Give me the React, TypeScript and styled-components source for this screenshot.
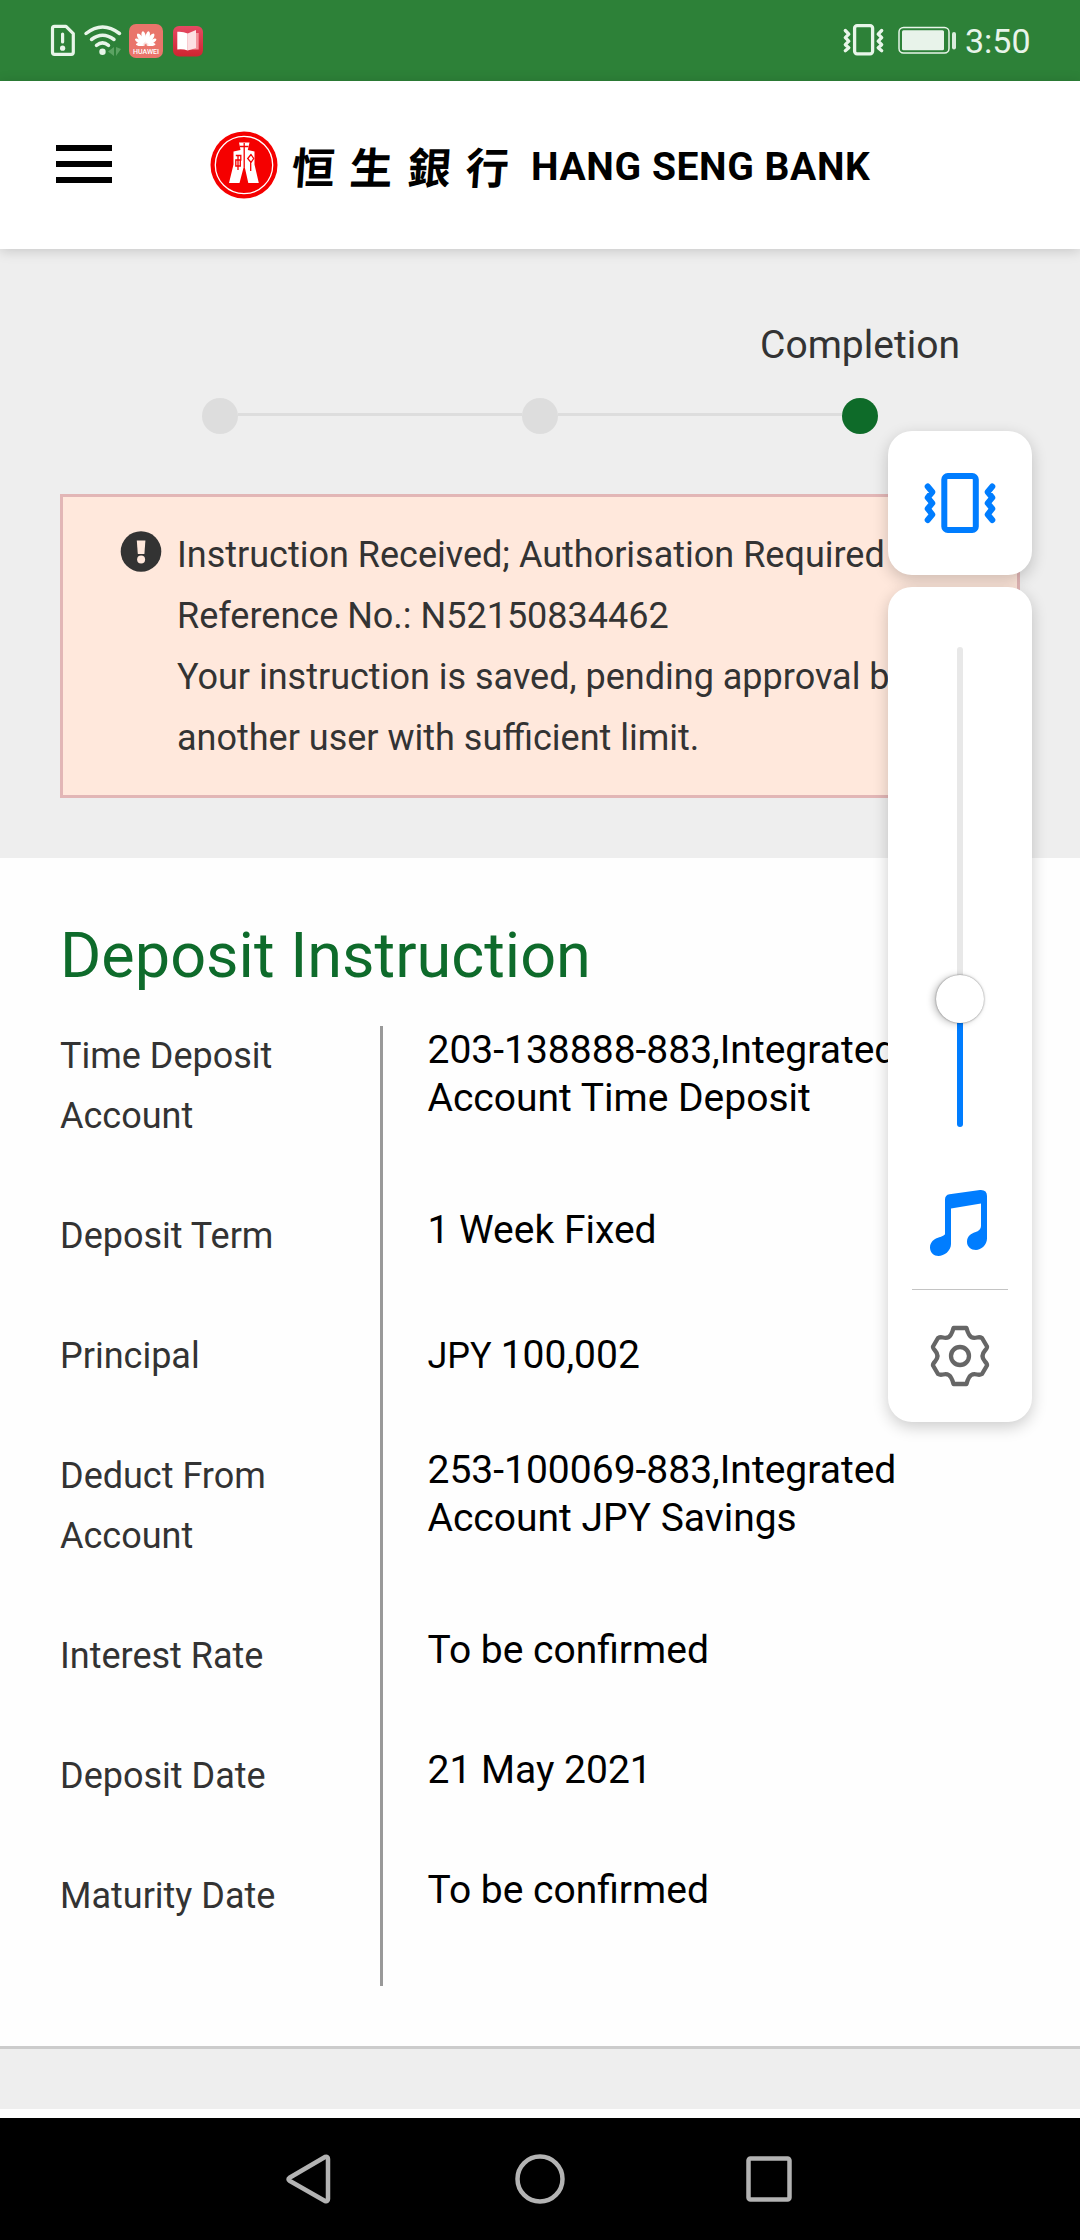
import React from "react";
import styled, { createGlobalStyle } from "styled-components";

const GlobalStyle = createGlobalStyle`
  * { box-sizing: border-box; }
  body { margin: 0; background: #fff; }
`;

const Screen = styled.div`
  position: relative;
  display: flex;
  flex-direction: column;
  width: 1080px;
  height: 2240px;
  overflow: hidden;
  background: #fefefe;
  font-family: Roboto, "Noto Sans", sans-serif;
  color: #333;
`;

const StatusBar = styled.div`
  display: flex;
  justify-content: space-between;
  height: 81px;
  flex: none;
  padding: 0 50px 0 50px;
  background: #2d8138;
`;

const StatusIcons = styled.svg`
  width: 160px;
  height: 81px;
`;

const StatusRight = styled.div`
  display: flex;
  gap: 7px;
`;

const BatteryIcons = styled.svg`
  width: 118px;
  height: 81px;
`;

const Clock = styled.span`
  width: 65px;
  font-size: 34px;
  line-height: 81px;
  padding-top: 1px;
  color: #e8f4ea;
  white-space: nowrap;
`;

const Header = styled.header`
  position: relative;
  z-index: 1;
  display: flex;
  align-items: center;
  height: 168px;
  flex: none;
  padding: 0 56px;
  background: #fff;
  box-shadow: 0 2px 12px rgba(0, 0, 0, 0.17);
`;

const MenuButton = styled.div`
  display: flex;
  flex-direction: column;
  gap: 10px;
  width: 56px;
  margin-bottom: 2px;
`;

const MenuBar = styled.span`
  height: 6px;
  background: #000;
`;

const Logo = styled.div`
  display: flex;
  align-items: center;
  margin-left: 98px;
`;

const Emblem = styled.svg`
  width: 68px;
  height: 68px;
`;

const ChineseName = styled.span`
  width: 239px;
  margin-left: 14px;
  font-family: "Noto Sans CJK TC", sans-serif;
  font-weight: 700;
  font-size: 43px;
  line-height: 60px;
  letter-spacing: 15px;
  color: #000;
  white-space: nowrap;
  transform: skewX(-4deg);
`;

const EnglishName = styled.span`
  margin-top: 4px;
  font-weight: 700;
  font-size: 39px;
  line-height: 60px;
  letter-spacing: 0.6px;
  color: #000;
  white-space: nowrap;
`;

const Summary = styled.section`
  display: flex;
  flex-direction: column;
  height: 609px;
  flex: none;
  padding: 73px 60px 0;
  background: #eee;
`;

const Steps = styled.div`
  display: grid;
  grid-template-columns: repeat(3, 320px);
  height: 172px;
`;

const Step = styled.div`
  display: flex;
  flex-direction: column;
`;

const StepLabel = styled.div`
  height: 76px;
  font-size: 39px;
  line-height: 46px;
  text-align: center;
`;

const StepTrack = styled.div`
  display: flex;
  align-items: center;
  height: 36px;
`;

const StepLine = styled.span<{ $visible: boolean }>`
  flex: 1;
  height: 3px;
  margin-bottom: 3px;
  background: ${(p) => (p.$visible ? "#ddd" : "transparent")};
`;

const StepDot = styled.span<{ $active: boolean }>`
  width: 36px;
  height: 36px;
  border-radius: 50%;
  background: ${(p) => (p.$active ? "#0e6b29" : "#ddd")};
`;

const Alert = styled.div`
  display: flex;
  height: 304px;
  padding: 27px 30px 0 57px;
  border: 3px solid #e2b6b6;
  background: #ffe8dc;
`;

const AlertIcon = styled.svg`
  width: 42px;
  height: 42px;
  margin-top: 6px;
  flex: none;
`;

const AlertText = styled.div`
  margin-top: 1px;
  margin-left: 15px;
  font-size: 36px;
  line-height: 61px;
  white-space: nowrap;
`;

const Details = styled.section`
  height: 1191px;
  flex: none;
  padding: 58px 60px 0;
  border-bottom: 3px solid #ccc;
  background: #fefefe;
`;

const Title = styled.h1`
  margin: 0;
  height: 110px;
  font-weight: 400;
  font-size: 63px;
  line-height: 80px;
  color: #0e6b2b;
`;

const Columns = styled.div`
  display: flex;
  height: 960px;
`;

const Labels = styled.div`
  width: 323px;
  border-right: 3px solid #999;
`;

const Values = styled.div`
  padding-left: 44.5px;
`;

const Label = styled.div<{ $tall: boolean }>`
  width: 260px;
  height: ${(p) => (p.$tall ? 180 : 120)}px;
  font-size: 36px;
  line-height: 60px;
`;

const Value = styled.div<{ $tall: boolean; $loose?: boolean }>`
  width: 500px;
  height: ${(p) => (p.$tall ? 180 : 120)}px;
  font-size: 39px;
  line-height: ${(p) => (p.$loose ? 59 : 48)}px;
  color: #000;
`;

const Currency = styled.span`
  font-size: 36px;
`;

const Footer = styled.div`
  height: 60px;
  flex: none;
  background: #eee;
`;

const NavBar = styled.nav`
  display: flex;
  align-items: center;
  justify-content: center;
  gap: 170px;
  height: 122px;
  margin-top: 9px;
  flex: none;
  background: #000;
`;

const NavIcon = styled.svg`
  width: 60px;
  height: 60px;
  fill: none;
  stroke: #b3b3b3;
  stroke-width: 4.5;
  stroke-linejoin: round;
`;

const VolumeOverlay = styled.div`
  position: absolute;
  z-index: 2;
  top: 431px;
  left: 888px;
  display: flex;
  flex-direction: column;
  gap: 12px;
  width: 144px;
`;

const Panel = styled.div<{ $height: number }>`
  display: flex;
  flex-direction: column;
  align-items: center;
  height: ${(p) => p.$height}px;
  border-radius: 24px;
  background: #fff;
  box-shadow: 0 5px 16px rgba(0, 0, 0, 0.2);
`;

const ModeIcon = styled.svg`
  width: 144px;
  height: 144px;
`;

const Slider = styled.div`
  display: flex;
  flex-direction: column;
  align-items: center;
  height: 480px;
  margin-top: 60px;
`;

const SliderRest = styled.span`
  width: 6px;
  height: 328px;
  border-radius: 3px 3px 0 0;
  background: #e8e8e8;
`;

const SliderThumb = styled.span`
  z-index: 1;
  width: 48px;
  height: 48px;
  border-radius: 50%;
  background: #fff;
  box-shadow: 0 0 2px rgba(0, 0, 0, 0.5), -3px 1px 7px rgba(0, 0, 0, 0.22);
`;

const SliderFill = styled.span`
  width: 6px;
  height: 104px;
  border-radius: 0 0 3px 3px;
  background: #007dff;
`;

const MusicIcon = styled.svg`
  width: 60px;
  height: 70px;
  margin: 61px 4px 0 0;
`;

const Divider = styled.span`
  width: 96px;
  height: 1px;
  flex: none;
  margin-top: 31px;
  background: #c4c4c4;
`;

const GearIcon = styled.svg`
  width: 64px;
  height: 64px;
  margin-top: 34px;
`;

const steps = ["", "", "Completion"];

const rows: { label: string; value: string; currency?: string; tall?: boolean }[] = [
  { label: "Time Deposit Account", value: "203-138888-883,Integrated Account Time Deposit", tall: true },
  { label: "Deposit Term", value: "1 Week Fixed" },
  { label: "Principal", currency: "JPY", value: "100,002" },
  { label: "Deduct From Account", value: "253-100069-883,Integrated Account JPY Savings", tall: true },
  { label: "Interest Rate", value: "To be confirmed" },
  { label: "Deposit Date", value: "21 May 2021" },
  { label: "Maturity Date", value: "To be confirmed" },
];

const petals = [-82, -58, -35, -12, 12, 35, 58, 82];

export default function App() {
  return (
    <Screen>
      <GlobalStyle />
      <StatusBar>
        <StatusIcons viewBox="50 0 160 81">
          <g fill="none" stroke="#e8f5e9" strokeLinecap="round" strokeLinejoin="round">
            <path d="M54.5 26.3H66L73.3 33.6V52.3Q73.3 54.3 71.3 54.3H54.5Q52.5 54.3 52.5 52.3V28.3Q52.5 26.3 54.5 26.3Z" strokeWidth="3.2" />
            <path d="M62.6 34v8" strokeWidth="3.2" />
            <path d="M86 33.5Q102.500 20.500 119.500 33.500M91.500 39.500Q102.500 31 114 39.500M96.500 45.300Q102.500 40.500 108.500 45.300" strokeWidth="3.5" />
          </g>
          <circle cx="62.600" cy="48.200" r="2.600" fill="#e8f5e9" />
          <circle cx="102.500" cy="51.800" r="3.200" fill="#e8f5e9" />
          <path d="M108 51.500l6-4.500v9zM116 47v9l5-7z" fill="#5ca363" />
          <rect x="129" y="24" width="34" height="34" rx="7" fill="#e9756b" />
          <g fill="#fff">
            {petals.map((a) => (
              <path key={a} d="M0-1C-1.500-5-3-9-1.500-13Q0-16 1.500-13C3-9 1.500-5 0-1Z" transform={`translate(145.700 45.500) rotate(${a}) scale(${Math.abs(a) > 70 ? 0.68 : Math.abs(a) > 50 ? 0.86 : 1})`} />
            ))}
          </g>
          <text x="133" y="53.800" textLength="26" lengthAdjust="spacingAndGlyphs" fontSize="6.500" fontWeight="500" fill="#fff">HUAWEI</text>
          <defs>
            <linearGradient id="bookRed" x1="0" y1="0" x2="0" y2="1">
              <stop offset="0" stopColor="#e64a63" />
              <stop offset="1" stopColor="#cf2430" />
            </linearGradient>
          </defs>
          <rect x="173" y="26" width="30" height="30.500" rx="6" fill="url(#bookRed)" />
          <path d="M193 33h5.700v16.500h-11z" fill="#f4939b" />
          <path d="M177.300 31.800Q183 31.300 187.700 33.500V50.500Q183 48.800 177.300 49.500Z" fill="#fff" />
          <path d="M187.700 33.500L196 30V48L187.700 50.500Z" fill="#fde0e3" />
        </StatusIcons>
        <StatusRight>
          <BatteryIcons viewBox="840 0 118 81">
            <g fill="none" stroke="#e8f5e9" strokeLinecap="round" strokeLinejoin="round">
              <rect x="854.600" y="25.600" width="18" height="28.200" rx="2.500" strokeWidth="3.300" />
              <path d="M845.300 30.500l3.500 3.700-3.500 3.500 3.500 3.500-3.500 3.500 3.500 3-3.500 3M881.700 30.500l-3.500 3.700 3.500 3.500-3.500 3.500 3.500 3.500-3.500 3 3.500 3" strokeWidth="3.300" />
              <rect x="899" y="27.500" width="50" height="25.500" rx="4.500" strokeWidth="1.500" />
            </g>
            <rect x="902" y="30.300" width="42" height="20" rx="1.500" fill="#e8f3ea" />
            <rect x="952" y="32" width="4" height="17.500" rx="2" fill="#d9ecdc" />
          </BatteryIcons>
          <Clock>3:50</Clock>
        </StatusRight>
      </StatusBar>

      <Header>
        <MenuButton>
          <MenuBar />
          <MenuBar />
          <MenuBar />
        </MenuButton>
        <Logo>
          <Emblem viewBox="0 0 68 68">
            <circle cx="34" cy="34" r="33.500" fill="#f50000" />
            <circle cx="34" cy="34" r="28.700" fill="none" stroke="#fff" strokeWidth="1.300" />
            <path d="M29 11.500h10.500l-1.700 7.500 6.700 1.500v13l4.300 18.500h-10.500L34.700 36h-1L29.500 52H19l4.500-18.500v-13l7-1.500z" fill="#fff" />
            <path d="M34.200 12v24M29.500 15.500h9M25.800 24.500h5v4.500h-5v6h4.500v-6M28 24.500v14.500M41 23.500l-3.300 4 3.300 4 2.700-4zM40.700 31v9" fill="none" stroke="#f50000" strokeWidth="1.300" />
          </Emblem>
          <ChineseName>恒生銀行</ChineseName>
          <EnglishName>HANG SENG BANK</EnglishName>
        </Logo>
      </Header>

      <Summary>
        <Steps>
          {steps.map((label, i) => (
            <Step key={i}>
              <StepLabel>{label}</StepLabel>
              <StepTrack>
                <StepLine $visible={i > 0} />
                <StepDot $active={i === steps.length - 1} />
                <StepLine $visible={i < steps.length - 1} />
              </StepTrack>
            </Step>
          ))}
        </Steps>
        <Alert>
          <AlertIcon viewBox="0 0 42 42">
            <circle cx="21" cy="21.500" r="20.300" fill="#333" />
            <path d="M16.800 10.500h8.600l-1 13.500h-6.600z" fill="#ffe8dc" />
            <circle cx="21.100" cy="29.500" r="4" fill="#ffe8dc" />
          </AlertIcon>
          <AlertText>
            Instruction Received; Authorisation Required
            <br />
            Reference No.: N52150834462
            <br />
            Your instruction is saved, pending approval by
            <br />
            another user with sufficient limit.
          </AlertText>
        </Alert>
      </Summary>

      <Details>
        <Title>Deposit Instruction</Title>
        <Columns>
          <Labels>
            {rows.map((r) => (
              <Label key={r.label} $tall={!!r.tall}>
                {r.label}
              </Label>
            ))}
          </Labels>
          <Values>
            {rows.map((r) => (
              <Value key={r.label} $tall={!!r.tall} $loose={!!r.currency}>
                {r.currency && <Currency>{r.currency} </Currency>}
                {r.value}
              </Value>
            ))}
          </Values>
        </Columns>
      </Details>
      <Footer />

      <NavBar>
        <NavIcon viewBox="0 0 60 60">
          <path d="M9.500 28.800L45 8Q48 7 48 10V50Q48 53 45 52L9.500 31.800Q7.500 30.300 9.500 28.800Z" />
        </NavIcon>
        <NavIcon viewBox="0 0 60 60">
          <circle cx="30" cy="30" r="22.500" />
        </NavIcon>
        <NavIcon viewBox="0 0 60 60">
          <rect x="8.500" y="9.500" width="41" height="41" rx="2" />
        </NavIcon>
      </NavBar>

      <VolumeOverlay>
        <Panel $height={144}>
          <ModeIcon viewBox="0 0 144 144">
            <g fill="none" stroke="#007dff" strokeWidth="6" strokeLinecap="round" strokeLinejoin="round">
              <rect x="56.300" y="45" width="31.500" height="54" rx="3.500" />
              <path d="M39.700 55.500l4.600 5.500-4.600 5.700 4.600 5.500-4.600 5.500 4.600 5.800-4.600 5.500M104.300 55.500l-4.600 5.500 4.600 5.700-4.600 5.500 4.600 5.500-4.600 5.800 4.600 5.500" />
            </g>
          </ModeIcon>
        </Panel>
        <Panel $height={835}>
          <Slider>
            <SliderRest />
            <SliderThumb />
            <SliderFill />
          </Slider>
          <MusicIcon viewBox="0 0 60 70">
            <path
              fillRule="evenodd"
              fill="#007dff"
              d="M17 11.500Q17 7 21.500 6.300L52 2Q59 1.500 59 8V50.500C59 57 53 62 48 62C43 62 39 58.500 39 54C39 48 43.500 45.500 47 44.300C51 43 53 41 53 38V15.500L23 20.500V56C23 63 16 68 10.500 68C6 68 2 64.500 2 59.500C2 54 6 51 10 49.700C13 48.700 17 47.500 17 46Z"
            />
          </MusicIcon>
          <Divider />
          <GearIcon viewBox="0 0 64 64">
            <g fill="none" stroke="#666" strokeWidth="4.300" strokeLinejoin="round">
              <path d="M25.500 4H38.500Q39.500 8 41 10.500Q43.500 15 49 13.500Q52 12.800 54 14L59 22.500Q59.300 24 57 26.500Q52 32 57 37.500Q59.300 40 59 41.500L54 50Q52 51.200 49 50.500Q43.500 49 41 53.500Q39.500 56 38.500 60H25.500Q24.500 56 23 53.500Q20.500 49 15 50.500Q12 51.200 10 50L5 41.500Q4.700 40 7 37.500Q12 32 7 26.500Q4.700 24 5 22.500L10 14Q12 12.800 15 13.500Q20.500 15 23 10.500Q24.500 8 25.500 4Z" />
              <circle cx="32" cy="32" r="9" />
            </g>
          </GearIcon>
        </Panel>
      </VolumeOverlay>
    </Screen>
  );
}
